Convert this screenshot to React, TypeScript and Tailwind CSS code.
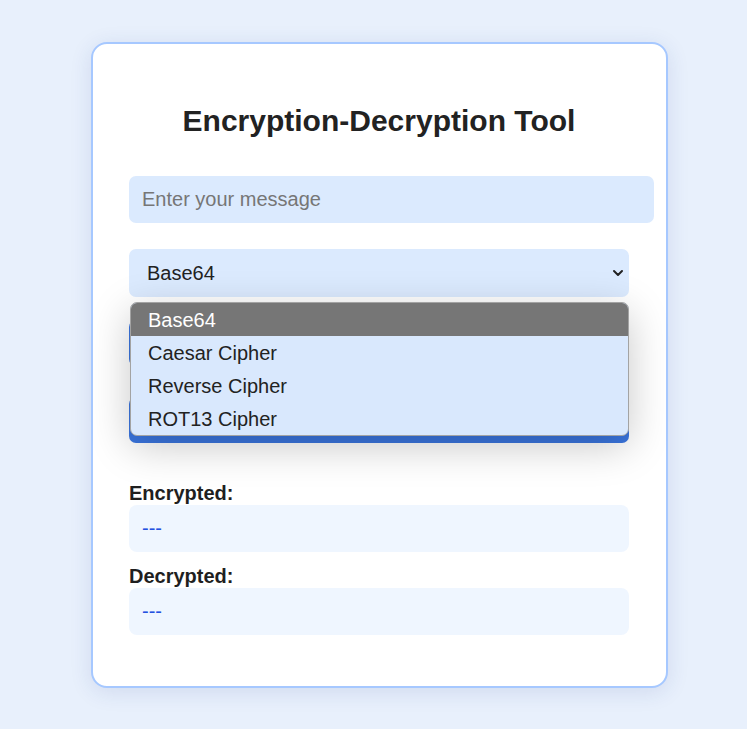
import React from "react";

export default function App() {
  const options = ["Base64", "Caesar Cipher", "Reverse Cipher", "ROT13 Cipher"];
  return (
    <div
      className="min-h-screen w-full bg-[#e8f0fc] pt-[42px] pb-[40px] pl-[91px]"
      style={{ fontFamily: '"Liberation Sans", Arial, sans-serif' }}
    >
      <div className="relative w-[577px] rounded-[16px] border-2 border-[#a6c8ff] bg-white pl-[36px] pr-[37px] pt-[36px] pb-[51px] shadow-[0_4px_22px_rgba(30,60,140,0.12)]">
        <h2 className="mt-[24px] text-center text-[30px] font-bold leading-[34px] text-[#222222]">
          Encryption-Decryption Tool
        </h2>

        <input
          type="text"
          placeholder="Enter your message"
          className="mt-[38px] block h-[47px] w-[525px] rounded-[7px] bg-[#dbeafe] px-[13px] text-[20px] text-[#222] placeholder:text-[#767676] outline-none"
        />

        <div className="relative mt-[26px] h-[48px] w-[500px]">
          <div className="flex h-full w-full items-center rounded-[7px] bg-[#dbeafe] pl-[18px] text-[20px] text-[#222]">
            Base64
          </div>
          <svg
            className="absolute right-[5px] top-[19px]"
            width="12"
            height="10"
            viewBox="0 0 12 10"
            fill="none"
          >
            <path d="M2 3 L6 7 L10 3" stroke="#222" strokeWidth="2" strokeLinecap="round" strokeLinejoin="round" />
          </svg>
        </div>

        <button className="mt-[23px] block h-[46px] w-[500px] rounded-[7px] bg-[#3b76e0] text-[20px] font-bold text-white">
          Encrypt
        </button>
        <button className="mt-[31px] block h-[46px] w-[500px] rounded-[7px] bg-[#3b76e0] text-[20px] font-bold text-white">
          Decrypt
        </button>

        <div className="mt-[39px] text-[20px] font-bold leading-[23px] text-[#1f1f1f]">Encrypted:</div>
        <div className="h-[47px] w-[500px] rounded-[8px] bg-[#eff6ff] px-[13px] py-[12px] text-[20px] leading-[23px] text-[#2451e0]">
          ---
        </div>
        <div className="mt-[13px] text-[20px] font-bold leading-[23px] text-[#1f1f1f]">Decrypted:</div>
        <div className="h-[47px] w-[500px] rounded-[8px] bg-[#eff6ff] px-[13px] py-[12px] text-[20px] leading-[23px] text-[#2451e0]">
          ---
        </div>

        {/* open dropdown popup */}
        <div className="absolute left-[37px] top-[258px] w-[499px] overflow-hidden rounded-[7px] border border-[#a3a3a3] bg-[#d9e8fd] shadow-[0_10px_40px_rgba(0,0,0,0.22)]">
          {options.map((o, i) => (
            <div
              key={o}
              className={
                i === 0
                  ? "flex h-[33px] items-center bg-[#767676] pl-[17px] text-[20px] text-white"
                  : "flex h-[33px] items-center pl-[17px] text-[20px] text-[#222]"
              }
            >
              {o}
            </div>
          ))}
        </div>
      </div>
    </div>
  );
}
